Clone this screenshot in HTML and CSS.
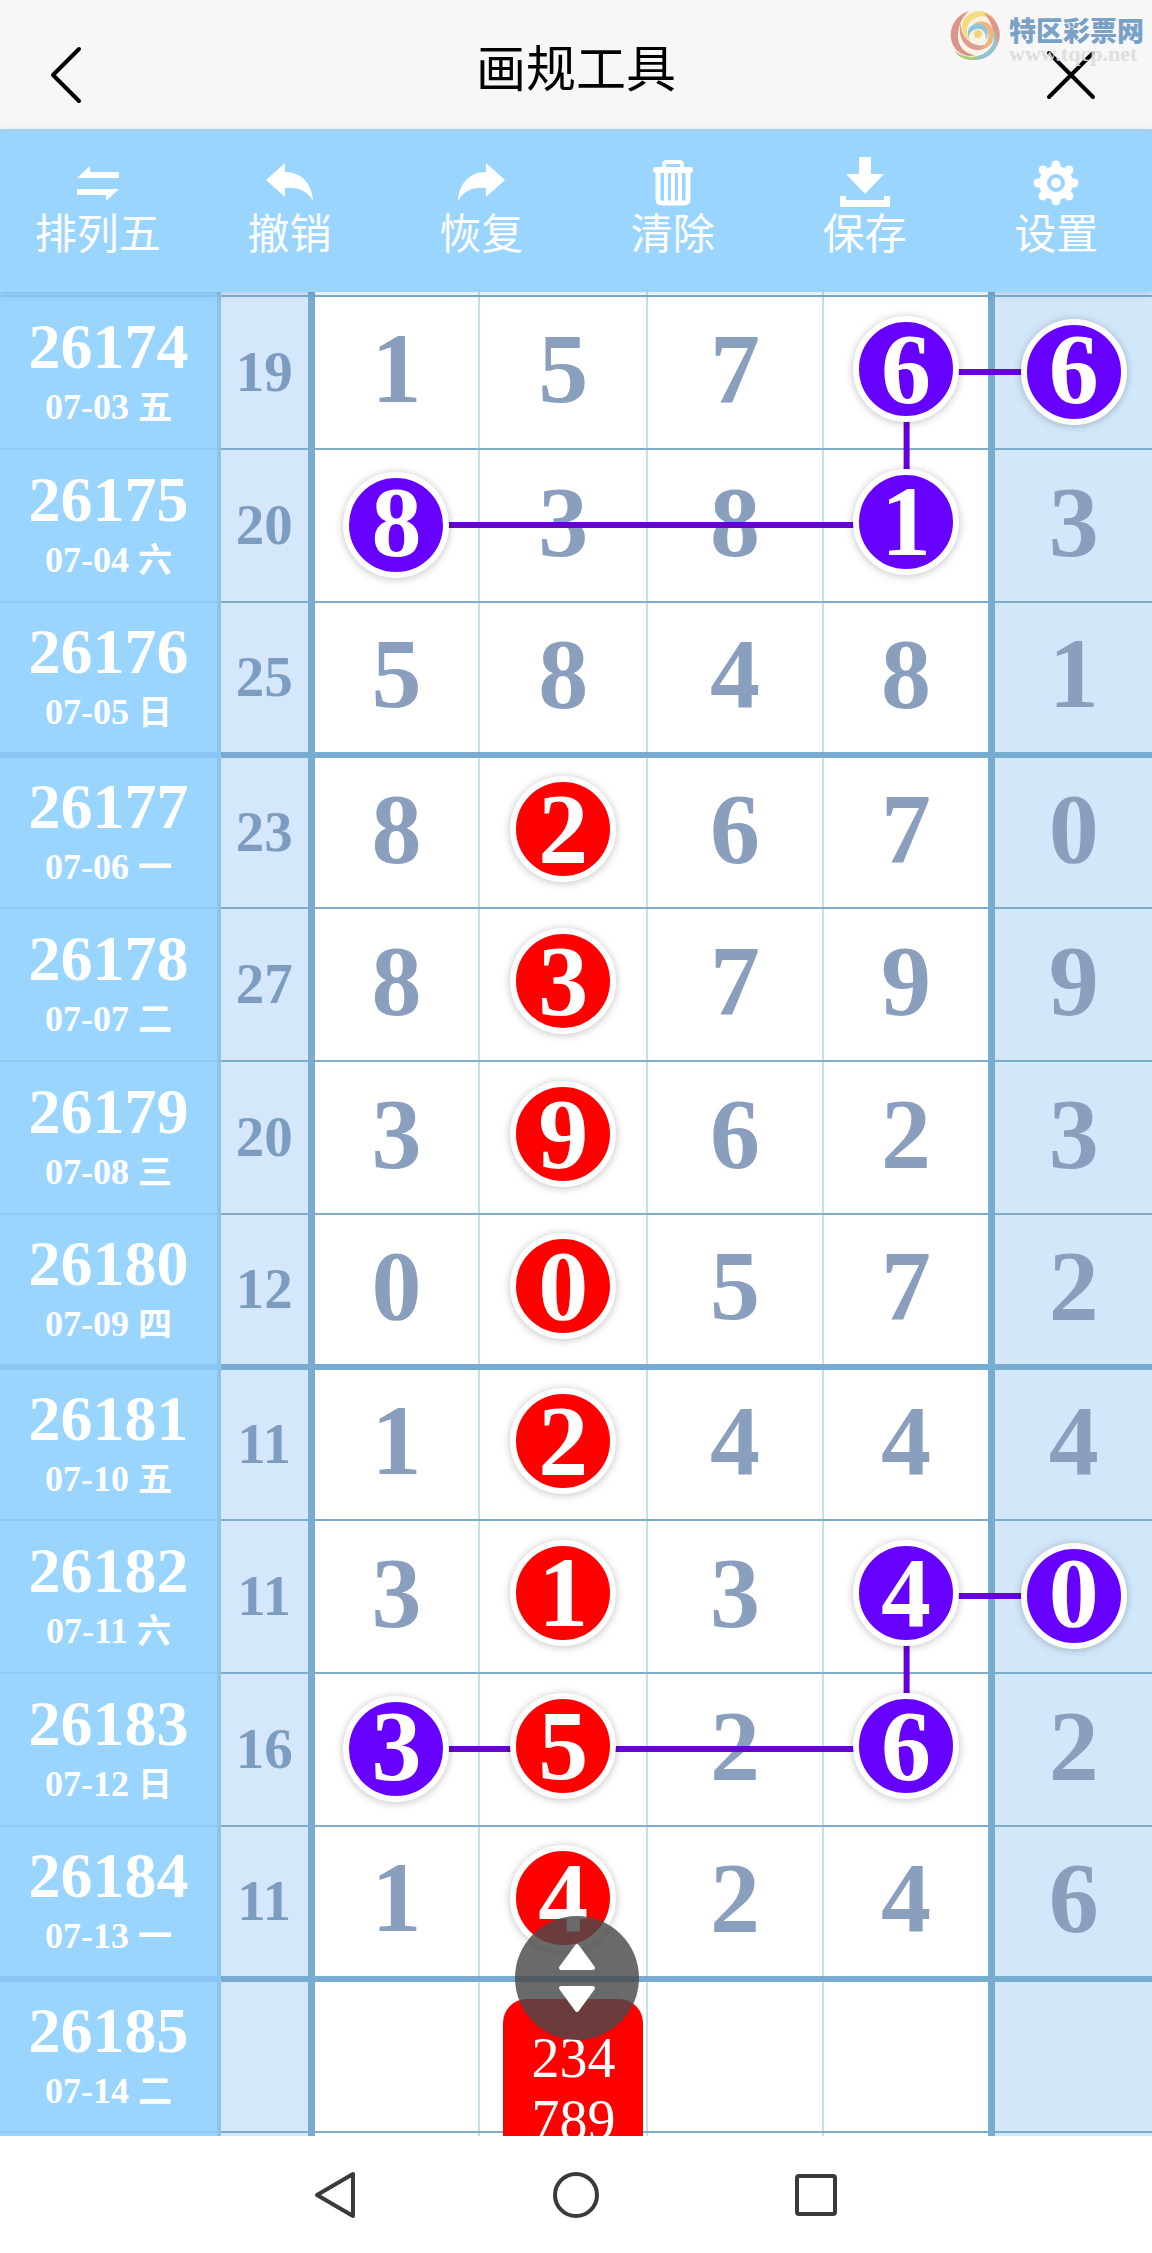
FILE: index.html
```html
<!DOCTYPE html>
<html lang="zh-CN">
<head>
  <meta charset="UTF-8">
  <meta name="viewport" content="width=device-width, initial-scale=1.0">
  <title>画规工具</title>
  <link rel="stylesheet" href="styles.css">
</head>
<body>
  <header class="header">
    <button class="icon-btn" aria-label="返回">
      <svg width="32" height="58" viewBox="0 0 32 58"><path d="M29 3L3 29L29 55" fill="none" stroke="#000" stroke-width="4" stroke-linecap="round" stroke-linejoin="round"/></svg>
    </button>
    <h1>画规工具</h1>
    <button class="icon-btn" aria-label="关闭">
      <svg width="50" height="50" viewBox="0 0 50 50"><path d="M3 3L47 47M47 3L3 47" fill="none" stroke="#000" stroke-width="4" stroke-linecap="round"/></svg>
    </button>
    <!-- Wasserzeichen -->
    <div class="logo">
      <svg width="52" height="52" viewBox="0 0 52 52">
        <circle cx="26" cy="26" r="25" fill="#fbf3e6"/>
        <path d="M20 2C4 7-2 24 4 36C8 44 17 49 26 46C14 44 8 35 9 25C10 14 14 7 20 2Z" fill="#d98a80"/>
        <path d="M12 13C8 26 14 38 26 41C35 42 42 37 44 31C37 38 27 38 20 32C14 27 11 20 12 13Z" fill="#dd9484"/>
        <path d="M16 9C26-2 42 1 47 13C40 6 29 5 22 12C16 18 17 27 22 32C13 27 10 17 16 9Z" fill="#f6d774"/>
        <path d="M35 4C47 8 53 20 50 32C48 38 45 42 41 44C48 33 46 17 35 4Z" fill="#dc8d80"/>
        <path d="M24 15C34 8 46 16 45 27C44 35 38 40 31 40C39 35 42 26 37 20C33 16 28 14 24 15Z" fill="#f0b070"/>
        <path d="M20 29C16 20 23 13 31 15C38 17 41 24 37 31C37 23 33 19 28 20C23 21 20 24 20 29Z" fill="#7fc4de"/>
        <path d="M6 42C18 52 34 49 42 38C46 32 46 26 44 20C50 28 50 38 42 45C32 54 14 53 6 42Z" fill="#86bfd0"/>
        <path d="M6 42C14 49 24 49 31 46C28 51 22 52 17 50C12 49 8 46 6 42Z" fill="#a9c66c"/>
        <circle cx="29" cy="25" r="4" fill="#f4cf6a"/>
      </svg>
      <div class="logo-text">
        <strong>特区彩票网</strong>
        <span>www.tqcp.net</span>
      </div>
    </div>
  </header>

  <nav class="toolbar">
    <button>
      <svg width="42" height="54" viewBox="0 0 42 54"><path d="M0 23L13 11V17H42V23ZM42 34L29 46V40H0V34Z" fill="#fff"/></svg>
      排列五
    </button>
    <button>
      <svg width="48" height="54" viewBox="0 0 48 54"><path d="M0 25L19 8V17C36 17 46 29 47 46C41 36 33 32 19 33V42Z" fill="#fff"/></svg>
      撤销
    </button>
    <button>
      <svg width="48" height="54" viewBox="0 0 48 54"><path d="M48 25L29 8V17C12 17 2 29 1 46C7 36 15 32 29 33V42Z" fill="#fff"/></svg>
      恢复
    </button>
    <button>
      <svg width="42" height="54" viewBox="0 0 42 54" fill="none" stroke="#fff">
        <path d="M12 13V10Q12 7 15 7H27Q30 7 30 10V13" stroke-width="4"/>
        <path d="M4 15H38" stroke-width="6" stroke-linecap="round"/>
        <path d="M6 17V44Q6 48 10 48H32Q36 48 36 44V17" stroke-width="5"/>
        <path d="M14 17V47M21 17V47M28 17V47" stroke-width="4"/>
      </svg>
      清除
    </button>
    <button>
      <svg width="50" height="54" viewBox="0 0 50 54"><path d="M19 2H31V19H44L25 39L6 19H19ZM0 41H6V45H44V41H50V52H0Z" fill="#fff"/></svg>
      保存
    </button>
    <button>
      <svg width="46" height="54" viewBox="0 0 46 54">
        <g stroke="#fff" stroke-width="9" stroke-linecap="round">
          <path d="M23 10V46M5 28H41M10 15L36 41M36 15L10 41"/>
        </g>
        <circle cx="23" cy="28" r="17" fill="#fff"/>
        <circle cx="23" cy="28" r="7" fill="#fff" stroke="#99d5ff" stroke-width="4"/>
      </svg>
      设置
    </button>
  </nav>

  <main class="chart">
    <table>
      <colgroup>
        <col class="c-issue"><col class="c-sum"><col class="c-1"><col class="c-2"><col class="c-3"><col class="c-4"><col class="c-5">
      </colgroup>
      <tbody>
        <tr class="peek"><th></th><td class="sum"></td><td></td><td></td><td></td><td></td><td class="last"></td></tr>
        <tr><th scope="row">26174<small>07-03 <i>五</i></small></th><td class="sum">19</td><td>1</td><td>5</td><td>7</td><td><span class="ball">6</span></td><td class="last"><span class="ball end">6</span></td></tr>
        <tr><th scope="row">26175<small>07-04 <i>六</i></small></th><td class="sum">20</td><td><span class="ball end">8</span></td><td>3</td><td>8</td><td><span class="ball">1</span></td><td class="last">3</td></tr>
        <tr class="thick"><th scope="row">26176<small>07-05 <i>日</i></small></th><td class="sum">25</td><td>5</td><td>8</td><td>4</td><td>8</td><td class="last">1</td></tr>
        <tr><th scope="row">26177<small>07-06 <i>一</i></small></th><td class="sum">23</td><td>8</td><td><span class="ball red">2</span></td><td>6</td><td>7</td><td class="last">0</td></tr>
        <tr><th scope="row">26178<small>07-07 <i>二</i></small></th><td class="sum">27</td><td>8</td><td><span class="ball red">3</span></td><td>7</td><td>9</td><td class="last">9</td></tr>
        <tr><th scope="row">26179<small>07-08 <i>三</i></small></th><td class="sum">20</td><td>3</td><td><span class="ball red">9</span></td><td>6</td><td>2</td><td class="last">3</td></tr>
        <tr class="thick"><th scope="row">26180<small>07-09 <i>四</i></small></th><td class="sum">12</td><td>0</td><td><span class="ball red">0</span></td><td>5</td><td>7</td><td class="last">2</td></tr>
        <tr><th scope="row">26181<small>07-10 <i>五</i></small></th><td class="sum">11</td><td>1</td><td><span class="ball red">2</span></td><td>4</td><td>4</td><td class="last">4</td></tr>
        <tr><th scope="row">26182<small>07-11 <i>六</i></small></th><td class="sum">11</td><td>3</td><td><span class="ball red">1</span></td><td>3</td><td><span class="ball">4</span></td><td class="last"><span class="ball end">0</span></td></tr>
        <tr><th scope="row">26183<small>07-12 <i>日</i></small></th><td class="sum">16</td><td><span class="ball end">3</span></td><td><span class="ball red">5</span></td><td>2</td><td><span class="ball">6</span></td><td class="last">2</td></tr>
        <tr class="thick"><th scope="row">26184<small>07-13 <i>一</i></small></th><td class="sum">11</td><td>1</td><td><span class="ball red">4</span></td><td>2</td><td>4</td><td class="last">6</td></tr>
        <tr><th scope="row">26185<small>07-14 <i>二</i></small></th><td class="sum"></td><td></td><td></td><td></td><td></td><td class="last"></td></tr>
        <tr><th></th><td class="sum"></td><td></td><td></td><td></td><td></td><td class="last"></td></tr>
      </tbody>
    </table>

    <!-- Verbindungslinien -->
    <svg class="links">
      <line x1="78.7%" y1="80" x2="93%" y2="80"/>
      <line x1="78.7%" y1="80" x2="78.7%" y2="233"/>
      <line x1="34.3%" y1="233" x2="78.7%" y2="233"/>
      <line x1="78.7%" y1="1304" x2="93%" y2="1304"/>
      <line x1="78.7%" y1="1304" x2="78.7%" y2="1457"/>
      <line x1="34.3%" y1="1457" x2="78.7%" y2="1457"/>
    </svg>

    <div class="guess">234<br>789</div>
    <button class="scroller" aria-label="滚动">
      <svg width="38" height="70" viewBox="0 0 38 70"><path d="M19 3L35 25H3ZM19 67L35 45H3Z" fill="#fff" stroke="#fff" stroke-width="4" stroke-linejoin="round"/></svg>
    </button>
  </main>

  <footer class="sysbar">
    <button aria-label="后退"><svg width="48" height="48" viewBox="0 0 48 48"><path d="M41 3V45L5 24Z"/></svg></button>
    <button aria-label="主页"><svg width="48" height="48" viewBox="0 0 48 48"><circle cx="24" cy="24" r="21"/></svg></button>
    <button aria-label="最近"><svg width="48" height="48" viewBox="0 0 48 48"><rect x="5" y="5" width="38" height="38" rx="2"/></svg></button>
  </footer>
</body>
</html>
```

FILE: styles.css
```css
* {
  box-sizing: border-box;
}
body {
  margin: 0;
  height: 100vh;
  display: flex;
  flex-direction: column;
  background: #fff;
  font-family: "Noto Sans CJK SC", sans-serif;
}
button {
  background: none;
  border: none;
  padding: 0;
  font-family: inherit;
  cursor: pointer;
}
svg {
  display: block;
}

/* header */
.header {
  position: relative;
  flex: none;
  height: 129px;
  padding: 20px 56px 0 50px;
  display: flex;
  align-items: center;
  background: #f7f7f7;
}
.header h1 {
  flex: 1;
  margin: 0;
  padding: 0 0 20px 24px;
  font-size: 50px;
  font-weight: 400;
  line-height: 60px;
  text-align: center;
  color: #000;
}
.logo {
  position: absolute;
  top: 9px;
  right: 8px;
  display: flex;
  gap: 8px;
  opacity: 0.9;
  pointer-events: none;
}
.logo-text {
  display: flex;
  flex-direction: column;
  padding-top: 8px;
}
.logo-text strong {
  font-size: 27px;
  font-weight: 900;
  line-height: 26px;
  color: #6b98c0;
}
.logo-text span {
  font-family: "Liberation Serif", serif;
  font-size: 22px;
  font-weight: bold;
  line-height: 22px;
  color: #dcdcdc;
}

/* toolbar */
.toolbar {
  position: relative;
  z-index: 3;
  flex: none;
  height: 163px;
  padding-left: 2px;
  display: flex;
  background: #99d5ff;
  border-top: 3px solid #a3cde9;
  box-shadow: 0 2px 8px rgba(0, 40, 100, 0.15);
}
.toolbar button {
  flex: 1;
  display: flex;
  flex-direction: column;
  align-items: center;
  padding-top: 23px;
  font-size: 42px;
  line-height: 44px;
  color: #fff;
}

/* chart */
.chart {
  position: relative;
  flex: 1;
  min-height: 0;
  overflow: hidden;
}
table {
  width: 100%;
  table-layout: fixed;
  border-collapse: collapse;
  font-family: "Liberation Serif", "Noto Sans CJK SC", serif;
  font-weight: bold;
}
.c-issue { width: 19%; }
.c-sum { width: 8%; }
.c-1 { width: 14.6%; }
.c-2 { width: 14.6%; }
.c-3 { width: 15.2%; }
.c-4 { width: 14.7%; }
.c-5 { width: 13.9%; }
tr {
  height: 153px;
}
.peek {
  height: 4px;
}
th, td {
  padding: 0;
  text-align: center;
  vertical-align: middle;
}
td {
  padding-bottom: 8px;
  border-bottom: 2px solid #7fadc9;
  border-right: 2px solid #c5dfe8;
  font-size: 100px;
  line-height: 98px;
  color: #8a9fbe;
}
th {
  padding-top: 3px;
  background: #99d5ff;
  border-bottom: 2px solid #8fcaf5;
  border-right: 4px solid #8fc3ea;
  font-size: 64px;
  line-height: 64px;
  color: #fff;
}
small {
  display: block;
  font-size: 36px;
  line-height: 52px;
}
small i {
  font-family: "Noto Sans CJK SC", sans-serif;
  font-style: normal;
  font-size: 34px;
}
.sum {
  padding-bottom: 2px;
  background: #d5e8fb;
  border-right: 7px solid #77abd0;
  font-size: 57px;
  line-height: 57px;
  color: #7d9dc0;
}
.last {
  background: #d2e8fa;
  border-left: 7px solid #77abd0;
  border-right: none;
}
.thick td {
  border-bottom: 6px solid #77abd0;
}
.thick th {
  border-bottom: 6px solid #8cc6f3;
}
.peek th, .peek td {
  padding: 0;
  line-height: 0;
}

.ball {
  position: relative;
  z-index: 2;
  display: flex;
  align-items: center;
  justify-content: center;
  width: 106px;
  height: 106px;
  margin: 0 auto;
  border: 6px solid #fff;
  border-radius: 50%;
  background: #6600ff;
  color: #fff;
  box-shadow: 0 1px 8px rgba(0, 0, 0, 0.25);
}
.ball.red {
  background: #ff0000;
}
.ball.end {
  margin-top: 6px;
  padding-bottom: 6px;
}
.links {
  position: absolute;
  top: 0;
  left: 0;
  z-index: 1;
  width: 100%;
  height: 100%;
  stroke: #6600dd;
  stroke-width: 6;
  pointer-events: none;
}
.guess {
  position: absolute;
  top: 1707px;
  left: 43.7%;
  z-index: 2;
  width: 140px;
  height: 200px;
  padding-top: 28px;
  border-radius: 24px;
  background: #ff0000;
  font-family: "Liberation Serif", serif;
  font-size: 56px;
  line-height: 62px;
  text-align: center;
  color: #fff;
}
.scroller {
  position: absolute;
  top: 1624px;
  left: 50%;
  z-index: 3;
  width: 124px;
  height: 124px;
  margin-left: -61px;
  border-radius: 50%;
  background: rgba(73, 73, 73, 0.82);
}
.scroller svg {
  margin: 0 auto;
}

/* system bar */
.sysbar {
  flex: none;
  height: 117px;
  padding: 0 18.75%;
  display: flex;
  background: #fff;
}
.sysbar button {
  flex: 1;
}
.sysbar svg {
  margin: 0 auto;
  fill: none;
  stroke: #3a3a3a;
  stroke-width: 4;
  stroke-linejoin: round;
}
```
